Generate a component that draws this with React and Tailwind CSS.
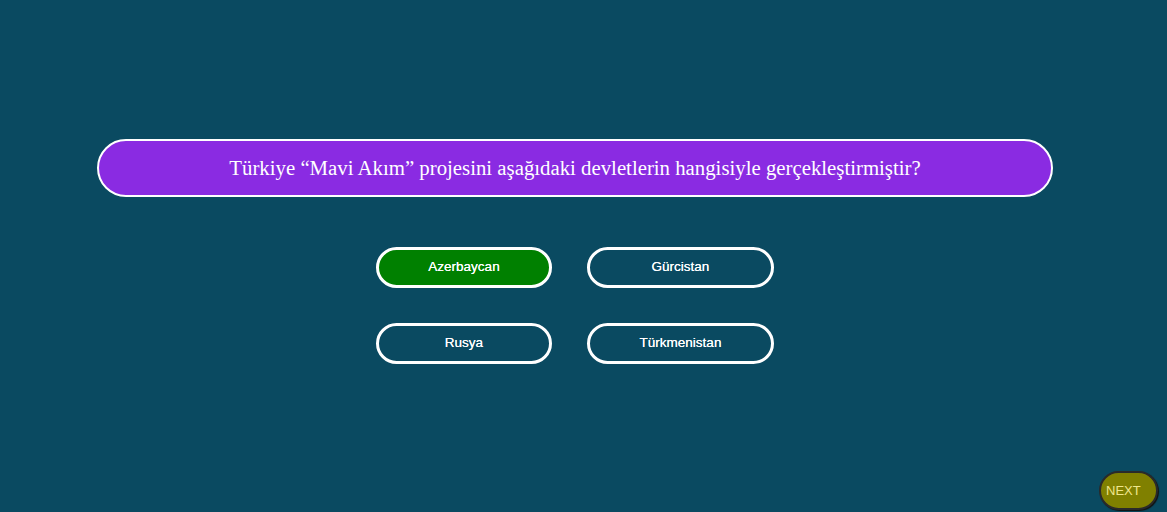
export default function App() {
  const options = [
    { label: "Azerbaycan", w: "w-[176px]", active: true },
    { label: "Gürcistan", w: "w-[187px]", active: false },
    { label: "Rusya", w: "w-[176px]", active: false },
    { label: "Türkmenistan", w: "w-[187px]", active: false },
  ];

  return (
    <div className="relative h-[512px] w-full overflow-hidden bg-[#0a4a61]">
      <div className="pt-[139px]">
        <div className="ml-[97px] flex h-[58px] w-[956px] items-center justify-center rounded-full border-2 border-white bg-[#8a2be2]">
          <p className="font-['Liberation_Serif',serif] text-[20.8px] text-white">
            Türkiye “Mavi Akım” projesini aşağıdaki devletlerin hangisiyle
            gerçekleştirmiştir?
          </p>
        </div>

        <div className="ml-[376px] mt-[50px] grid w-fit grid-cols-[176px_187px] gap-x-[35px] gap-y-[35px]">
          {options.map((o) => (
            <button
              key={o.label}
              className={`flex h-[41px] ${o.w} items-center justify-center rounded-full border-[3px] border-white font-['Liberation_Sans',Arial,sans-serif] text-[13.5px] text-white [text-shadow:0_0_0.6px_#fff] ${
                o.active ? "bg-[#008000]" : "bg-transparent"
              }`}
            >
              {o.label}
            </button>
          ))}
        </div>
      </div>

      <button className="absolute left-[1099px] top-[471px] flex h-[39px] w-[59px] items-center justify-start rounded-full border-2 border-[#2a2a2a] bg-[#808000] pl-[5px] font-['Liberation_Sans',Arial,sans-serif] text-[13px] text-[#f0e68c] shadow-[1px_1px_1px_#111]">
        NEXT
      </button>
    </div>
  );
}
